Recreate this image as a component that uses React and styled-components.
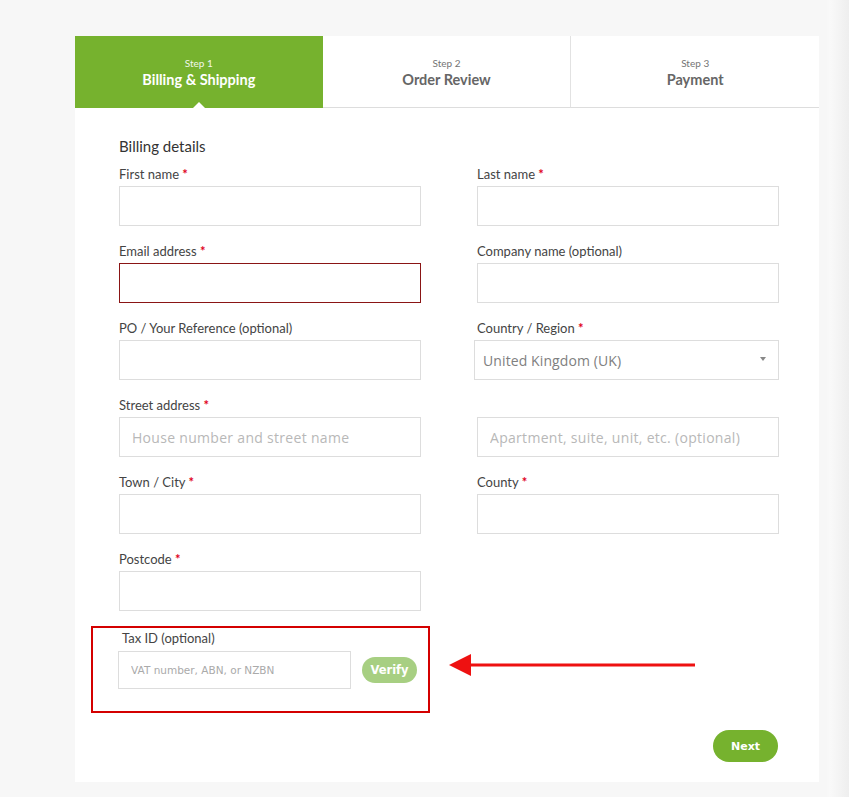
import React from 'react'
import styled, { createGlobalStyle } from 'styled-components'

const GlobalStyle = createGlobalStyle`
    html, body {
        margin: 0;
        padding: 0;
        min-height: 100%;
    }
    body {
        background: linear-gradient(to right, #f7f7f7 0, #f7f7f7 826px, #f9f9f9 830px, #eeeeee 849px);
        font-family: "Open Sans", "Liberation Sans", sans-serif;
        color: #444;
    }
`;

const steps = [
    {step: 'Step 1', title: 'Billing & Shipping'},
    {step: 'Step 2', title: 'Order Review'},
    {step: 'Step 3', title: 'Payment'},
]

const Req = () => <Star>*</Star>

const Field = ({label, required, placeholder, invalid, children}) => {
    return(
        <FieldWrap>
            <Label>{label}{required && <> <Req/></>}</Label>
            {children || <Input placeholder={placeholder} $invalid={invalid}/>}
        </FieldWrap>
    )
}

const Arrow = () => (
    <ArrowSvg width="247" height="24" viewBox="0 0 247 24">
        <line x1="20" y1="12" x2="246" y2="12" stroke="#ee1111" strokeWidth="3"/>
        <polygon points="0,12 22,1 22,23" fill="#ee1111"/>
    </ArrowSvg>
)

const App = ()=>{
    return(
        <>
            <GlobalStyle/>
            <Page>
                <Card>
                    <Tabs>
                        {steps.map((s, i) => (
                            <Tab key={s.title} $active={i === 0} $divider={i === 2}>
                                <StepNo>{s.step}</StepNo>
                                <StepTitle>{s.title}</StepTitle>
                            </Tab>
                        ))}
                    </Tabs>
                    <Body>
                        <Heading>Billing details</Heading>
                        <Grid>
                            <Field label="First name" required/>
                            <Field label="Last name" required/>
                            <Field label="Email address" required invalid/>
                            <Field label="Company name (optional)"/>
                            <Field label="PO / Your Reference (optional)"/>
                            <Field label="Country / Region" required>
                                <Select>
                                    <span>United Kingdom (UK)</span>
                                    <Caret/>
                                </Select>
                            </Field>
                            <Field label="Street address" required placeholder="House number and street name"/>
                            <Field label={'\u00a0'} placeholder="Apartment, suite, unit, etc. (optional)"/>
                            <Field label="Town / City" required/>
                            <Field label="County" required/>
                            <Field label="Postcode" required/>
                        </Grid>
                        <TaxRow>
                            <TaxBox>
                                <TaxLabel>Tax ID (optional)</TaxLabel>
                                <TaxLine>
                                    <TaxInput placeholder="VAT number, ABN, or NZBN"/>
                                    <Pill $light>Verify</Pill>
                                </TaxLine>
                            </TaxBox>
                            <Arrow/>
                        </TaxRow>
                        <Footer>
                            <Pill $big>Next</Pill>
                        </Footer>
                    </Body>
                </Card>
            </Page>
        </>
    )
}

export default App;

const Page = styled.div`
    padding: 36px 0 16px 75px;
`;

const Card = styled.div`
    width: 744px;
    background-color: white;
`;

const Tabs = styled.div`
    display: flex;
    height: 72px;
`;

const Tab = styled.div`
    flex: 1;
    position: relative;
    display: flex;
    flex-direction: column;
    align-items: center;
    justify-content: center;
    box-sizing: border-box;
    background-color: ${({$active})=> $active ? '#76b22e' : 'white'};
    color: ${({$active})=> $active ? 'white' : '#666'};
    border-bottom: 1px solid ${({$active})=> $active ? '#76b22e' : '#dddddd'};
    border-left: ${({$divider})=> $divider ? '1px solid #e2e2e2' : 'none'};
    padding-top: 2px;
    ${({$active})=> $active && `
        &::after{
            content: '';
            position: absolute;
            left: 50%;
            bottom: -1px;
            margin-left: -6px;
            border-left: 6px solid transparent;
            border-right: 6px solid transparent;
            border-bottom: 6px solid white;
        }
    `}
`;

const StepNo = styled.div`
    font-family: "Lato", "Open Sans", sans-serif;
    font-size: 10px;
    line-height: 14px;
    opacity: 0.9;
`;

const StepTitle = styled.div`
    font-family: "Lato", "Open Sans", sans-serif;
    font-size: 14.5px;
    font-weight: 700;
    line-height: 20px;
`;

const Body = styled.div`
    padding: 28px 41px 20px 44px;
`;

const Heading = styled.div`
    font-family: "Lato", "Open Sans", sans-serif;
    font-size: 15px;
    color: #333;
    line-height: 20px;
    margin-bottom: 10px;
`;

const Grid = styled.div`
    display: grid;
    grid-template-columns: 302px 302px;
    column-gap: 56px;
    row-gap: 17px;
`;

const FieldWrap = styled.div`
    display: flex;
    flex-direction: column;
`;

const Label = styled.div`
    font-family: "Lato", "Open Sans", sans-serif;
    font-size: 13px;
    color: #444;
    line-height: 16px;
    margin-bottom: 4px;
`;

const Star = styled.span`
    color: #e0001b;
    font-weight: 700;
`;

const Input = styled.input`
    box-sizing: border-box;
    width: 100%;
    height: 40px;
    padding: 0 12px;
    border: 1px solid ${({$invalid})=> $invalid ? '#8a1515' : '#dddddd'};
    background: white;
    font-family: "Open Sans", sans-serif;
    font-size: 14px;
    letter-spacing: 0.3px;
    color: #555;
    outline: none;
    &::placeholder{
        color: #b8b8b8;
    }
`;

const Select = styled.div`
    box-sizing: border-box;
    height: 40px;
    margin-left: -3px;
    padding: 0 12px 0 8px;
    border: 1px solid #dddddd;
    display: flex;
    align-items: center;
    justify-content: space-between;
    font-family: "Open Sans", sans-serif;
    font-size: 14px;
    letter-spacing: 0.1px;
    color: #808080;
`;

const Caret = styled.span`
    width: 0;
    height: 0;
    border-left: 3px solid transparent;
    border-right: 3px solid transparent;
    border-top: 4px solid #888;
    margin-top: -2px;
`;

const TaxRow = styled.div`
    display: flex;
    align-items: flex-start;
    margin-top: 15px;
    margin-left: -28px;
`;

const TaxBox = styled.div`
    box-sizing: border-box;
    width: 339px;
    border: 2px solid #d40000;
    padding: 2px 11px 22px 25px;
`;

const TaxLabel = styled.div`
    font-family: "Lato", "Open Sans", sans-serif;
    font-size: 13px;
    color: #444;
    line-height: 16px;
    margin: 0 0 5px 4px;
`;

const TaxLine = styled.div`
    display: flex;
    align-items: center;
    gap: 11px;
`;

const TaxInput = styled.input`
    box-sizing: border-box;
    width: 233px;
    height: 38px;
    padding: 0 12px;
    border: 1px solid #dddddd;
    font-family: "DejaVu Sans", Verdana, sans-serif;
    font-size: 10.5px;
    outline: none;
    &::placeholder{
        color: #aaaaaa;
    }
`;

const Pill = styled.button`
    border: none;
    border-radius: 20px;
    height: ${({$big})=> $big ? '32px' : '26px'};
    width: ${({$big})=> $big ? '65px' : '55px'};
    padding: 0;
    background-color: ${({$light})=> $light ? '#a7cf82' : '#76b22e'};
    color: white;
    font-family: "DejaVu Sans", Verdana, sans-serif;
    font-size: ${({$big})=> $big ? '11px' : '11.5px'};
    font-weight: 700;
    cursor: pointer;
`;

const ArrowSvg = styled.svg`
    display: block;
    margin: 27px 0 0 19px;
`;

const Footer = styled.div`
    display: flex;
    justify-content: flex-end;
    margin-top: 17px;
`;
